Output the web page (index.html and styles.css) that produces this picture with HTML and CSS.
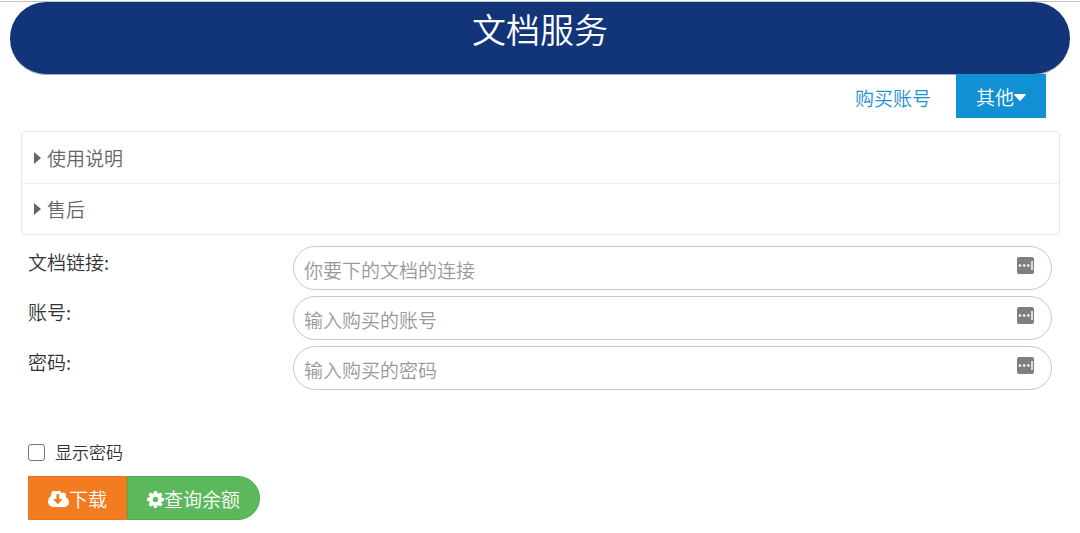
FILE: index.html
```html
<!DOCTYPE html>
<html lang="zh-CN">
<head>
<meta charset="utf-8">
<meta name="viewport" content="width=device-width, initial-scale=1">
<title>文档服务</title>
<link rel="stylesheet" href="styles.css">
</head>
<body>
<svg class="sprite" aria-hidden="true">
  <symbol id="autofill" viewBox="0 0 17 17">
    <rect width="17" height="17" rx="2" fill="#7f7f7f"/>
    <circle cx="3" cy="8.5" r="1.3" fill="#fff"/>
    <circle cx="7.2" cy="8.5" r="1.3" fill="#fff"/>
    <circle cx="11.4" cy="8.5" r="1.3" fill="#fff"/>
    <rect x="14" y="4" width="2" height="9" fill="#ddd"/>
  </symbol>
</svg>
<header class="banner"><h1 class="banner-title">文档服务</h1></header>
<main class="page">
  <nav class="nav">
    <a class="nav-link" href="#buy">购买账号</a>
    <button class="nav-button" type="button">其他<svg class="caret" viewBox="0 0 12 7" aria-hidden="true"><path d="M1 0h10q1.500 0 .5 1.200L6.700 6.400q-.7.7-1.400 0L.5 1.200Q-.5 0 1 0z" fill="currentColor"/></svg></button>
  </nav>
  <section class="panel">
    <button class="panel-item" type="button"><svg class="arrow" viewBox="0 0 7 12" aria-hidden="true"><path d="M0 0l7 6-7 6z" fill="currentColor"/></svg>使用说明</button>
    <button class="panel-item" type="button"><svg class="arrow" viewBox="0 0 7 12" aria-hidden="true"><path d="M0 0l7 6-7 6z" fill="currentColor"/></svg>售后</button>
  </section>
  <form class="form">
    <div class="row">
      <label class="label" for="link">文档链接:</label>
      <div class="field"><input class="input" id="link" type="text" placeholder="你要下的文档的连接"><svg class="autofill" aria-hidden="true"><use href="#autofill"/></svg></div>
    </div>
    <div class="row">
      <label class="label" for="account">账号:</label>
      <div class="field"><input class="input" id="account" type="text" placeholder="输入购买的账号"><svg class="autofill" aria-hidden="true"><use href="#autofill"/></svg></div>
    </div>
    <div class="row">
      <label class="label" for="password">密码:</label>
      <div class="field"><input class="input" id="password" type="password" placeholder="输入购买的密码"><svg class="autofill" aria-hidden="true"><use href="#autofill"/></svg></div>
    </div>
    <div class="show">
      <input class="check" id="show" type="checkbox">
      <label for="show">显示密码</label>
    </div>
    <div class="actions">
      <button class="action download" type="button"><svg class="cloud" viewBox="0 256 1920 1280" preserveAspectRatio="none" aria-hidden="true"><path fill="currentColor" d="M1280 928q0-14-9-23t-23-9h-224v-352q0-13-9.5-22.5t-22.5-9.5h-192q-13 0-22.5 9.5t-9.5 22.5v352h-224q-13 0-22.5 9.5t-9.500 22.5q0 14 9 23l352 352q9 9 23 9t23-9l351-351q10-12 10-24zm640 224q0 159-112.5 271.5t-271.5 112.5h-1088q-185 0-316.5-131.5t-131.5-316.5q0-130 70-240t188-165q-2-30-2-43 0-212 150-362t362-150q156 0 285.5 87t188.5 231q71-62 166-62 106 0 181 75t75 181q0 76-41 138 130 31 213.5 135.5t83.5 238.5z"/></svg>下载</button>
      <button class="action balance" type="button"><svg class="gear" viewBox="128 128 1536 1536" aria-hidden="true"><path fill="currentColor" d="M1152 896q0-106-75-181t-181-75-181 75-75 181 75 181 181 75 181-75 75-181zm512-109v222q0 12-8 23t-20 13l-185 28q-19 54-39 91 35 50 107 138 10 12 10 25t-9 23q-27 37-99 108t-94 71q-12 0-26-9l-138-108q-44 23-91 38-16 136-29 186-7 28-36 28h-222q-14 0-24.5-8.5t-11.500-21.5l-28-184q-49-16-90-37l-141 107q-10 9-25 9-14 0-25-11-126-114-165-168-7-10-7-23 0-12 8-23 15-21 51-66.5t54-70.5q-27-50-41-99l-183-27q-13-2-21-12.5t-8-23.5v-222q0-12 8-23t19-13l186-28q14-46 39-92-40-57-107-138-10-12-10-24 0-10 9-23 26-36 98.5-107.500t94.500-71.500q13 0 26 10l138 107q44-23 91-38 16-136 29-186 7-28 36-28h222q14 0 24.500 8.500t11.500 21.500l28 184q49 16 90 37l142-107q9-9 24-9 13 0 25 10 129 119 165 170 7 8 7 22 0 12-8 23-15 21-51 66.500t-54 70.500q26 50 41 98l183 28q13 2 21 12.500t8 23.500z"/></svg>查询余额</button>
    </div>
  </form>
</main>
</body>
</html>
```
FILE: styles.css
```css
* { box-sizing: border-box; }
html { padding-top: 1px; background: #fff; }
body {
  margin: 0;
  padding: 0 10px;
  border-top: 1px solid #c4c4c4;
  color: #333;
  font: 350 19px/28px "Noto Sans CJK SC DemiLight", "Noto Sans CJK SC", "Noto Sans", sans-serif;
}
button, input { margin: 0; font: inherit; }
button { border: 0; cursor: pointer; }
.sprite { display: block; width: 0; height: 0; }
.banner {
  height: 73px;
  border-bottom: 1px solid #9faecb;
  border-radius: 36px;
  background: #123478;
  color: #fff;
  text-align: center;
}
.banner-title { margin: 0; padding-top: 2px; font-size: 34px; line-height: 50px; font-weight: 400; }
.page { padding: 0 10px 0 11px; }
.nav { display: flex; justify-content: flex-end; align-items: center; margin-top: -1px; padding-right: 14px; gap: 25px; }
.nav-link { color: #2190d2; text-decoration: none; padding-top: 4px; }
.nav-button { display: flex; align-items: center; height: 44px; padding: 2px 20px 0; background: #1190d4; color: #fff; font-weight: 400; }
.caret { width: 12px; height: 7px; }
.panel { margin-top: 13px; border: 1px solid #e6e6e6; border-radius: 4px; }
.panel-item { display: flex; align-items: center; width: 100%; height: 51px; padding: 0 12px; background: none; color: #666; }
.panel-item + .panel-item { border-top: 1px solid #eee; }
.arrow { width: 7px; height: 12px; margin-right: 6px; }
.form { padding: 11px 8px 0 7px; }
.row { display: flex; margin-bottom: 6px; }
.label { flex: 0 0 265px; padding-top: 2px; }
.field { position: relative; flex: 1; }
.input { display: block; width: 100%; height: 44px; padding: 2px 40px 0 10px; border: 1px solid #c8c8c8; border-radius: 22px; background: #fff; color: #333; }
.input::placeholder { color: #999; opacity: 1; }
.autofill { position: absolute; right: 18px; top: 11px; width: 17px; height: 17px; }
.show { display: flex; align-items: center; gap: 10px; margin-top: 48px; font-size: 17px; }
.check { appearance: none; width: 17px; height: 17px; border: 1px solid #767676; border-radius: 3px; background: #fff; }
.actions { display: flex; margin-top: 10px; }
.action { display: flex; align-items: center; height: 44px; padding: 2px 19px 0; color: #fff; font-weight: 400; }
.download { border: 1px solid #ef7415; background: #f47c20; }
.balance { border: 1px solid #4cae4c; border-radius: 0 22px 22px 0; background: #5cb85c; }
.cloud { width: 21px; height: 16px; }
.gear { width: 17px; height: 17px; }
```
